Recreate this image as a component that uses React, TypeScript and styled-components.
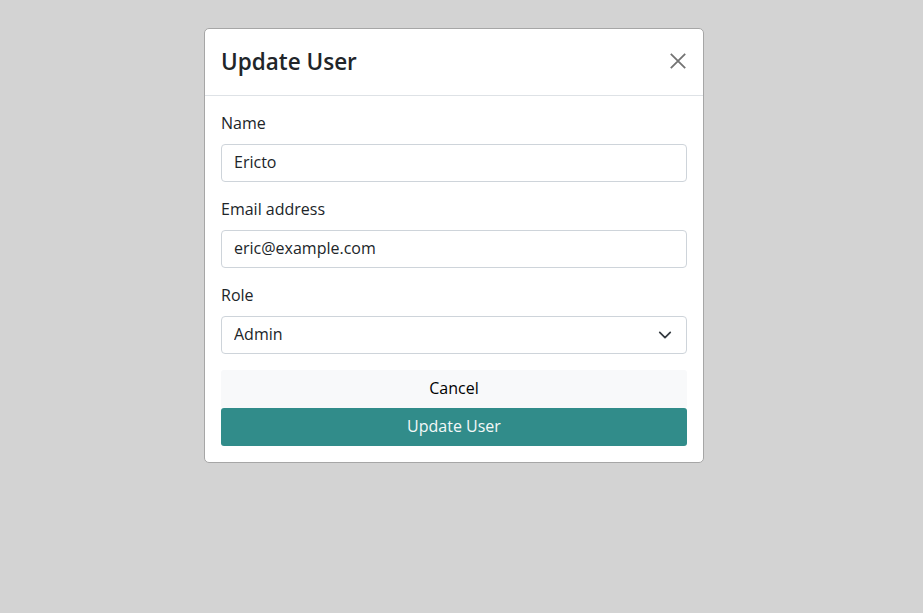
import React from "react";
import styled, { createGlobalStyle } from "styled-components";

const FONT = `"Open Sans", "Liberation Sans", sans-serif`;

const Global = createGlobalStyle`
  html, body { margin: 0; padding: 0; background: #d3d3d3; }
  body { font-family: ${FONT}; color: #212529; }
  * { box-sizing: border-box; }
`;

const Page = styled.div`
  width: 923px;
  height: 613px;
  background: #d3d3d3;
  display: flex;
  justify-content: center;
  align-items: flex-start;
  padding: 28px 15px 0 0;
`;

const Modal = styled.div`
  width: 500px;
  background: #fff;
  border: 1px solid #a6a6a6;
  border-radius: 5px;
  display: flex;
  flex-direction: column;
`;

const Header = styled.div`
  display: flex;
  align-items: center;
  justify-content: space-between;
  padding: 16px 17px 16px 16px;
  height: 67px;
  border-bottom: 1px solid #dee2e6;
`;

const Title = styled.h4`
  margin: 0;
  font-family: ${FONT};
  font-size: 22.5px;
  font-weight: 600;
  line-height: 34px;
  color: #212529;
`;

const CloseButton = styled.button`
  border: 0;
  background: transparent;
  padding: 0;
  width: 16px;
  height: 16px;
  margin-top: -3px;
  display: flex;
  align-items: center;
  justify-content: center;
  cursor: pointer;
`;

const Body = styled.form`
  padding: 16px;
  display: flex;
  flex-direction: column;
`;

const Field = styled.div`
  display: flex;
  flex-direction: column;
  margin-bottom: 16px;
`;

const Label = styled.label`
  font-size: 16px;
  line-height: 23px;
  margin-bottom: 9px;
  color: #212529;
`;

const Input = styled.input`
  height: 38px;
  width: 100%;
  padding: 5px 12px 7px;
  font-family: ${FONT};
  font-size: 16px;
  line-height: 24px;
  color: #212529;
  border: 1px solid #ced4da;
  border-radius: 4px;
  background: #fff;
  outline: none;
`;

const SelectWrap = styled.div`
  position: relative;
  width: 100%;
`;

const Select = styled.select`
  appearance: none;
  -webkit-appearance: none;
  height: 38px;
  width: 100%;
  padding: 5px 36px 7px 12px;
  font-family: ${FONT};
  font-size: 16px;
  line-height: 24px;
  color: #212529;
  border: 1px solid #ced4da;
  border-radius: 4px;
  background: #fff;
  outline: none;
`;

const Chevron = styled.svg`
  position: absolute;
  right: 15px;
  top: 12px;
  pointer-events: none;
`;

const Button = styled.button<{ $primary?: boolean }>`
  width: 100%;
  height: 38px;
  border: 0;
  border-radius: 3px;
  font-family: ${FONT};
  font-size: 16px;
  line-height: 24px;
  padding: 5px 12px 7px;
  cursor: pointer;
  background: ${(p) => (p.$primary ? "#318c8a" : "#f8f9fa")};
  color: ${(p) => (p.$primary ? "#f4f8f8" : "#000")};
`;

export default function App() {
  return (
    <>
      <Global />
      <Page>
        <Modal>
          <Header>
            <Title>Update User</Title>
            <CloseButton type="button" aria-label="Close">
              <svg width="16" height="16" viewBox="0 0 16 16">
                <path d="M0.8 0.8 L15.2 15.2 M15.2 0.8 L0.8 15.2" stroke="#737373" strokeWidth="1.8" fill="none" />
              </svg>
            </CloseButton>
          </Header>
          <Body onSubmit={(e) => e.preventDefault()}>
            <Field>
              <Label htmlFor="name">Name</Label>
              <Input id="name" defaultValue="Ericto" />
            </Field>
            <Field>
              <Label htmlFor="email">Email address</Label>
              <Input id="email" type="email" defaultValue="eric@example.com" />
            </Field>
            <Field>
              <Label htmlFor="role">Role</Label>
              <SelectWrap>
                <Select id="role" defaultValue="Admin">
                  <option>Admin</option>
                  <option>User</option>
                </Select>
                <Chevron width="14" height="14" viewBox="0 0 16 16">
                  <path d="m2 5 6 6 6-6" stroke="#343a40" strokeWidth="2" fill="none" strokeLinecap="round" strokeLinejoin="round" />
                </Chevron>
              </SelectWrap>
            </Field>
            <Button type="button">Cancel</Button>
            <Button type="submit" $primary>Update User</Button>
          </Body>
        </Modal>
      </Page>
    </>
  );
}
